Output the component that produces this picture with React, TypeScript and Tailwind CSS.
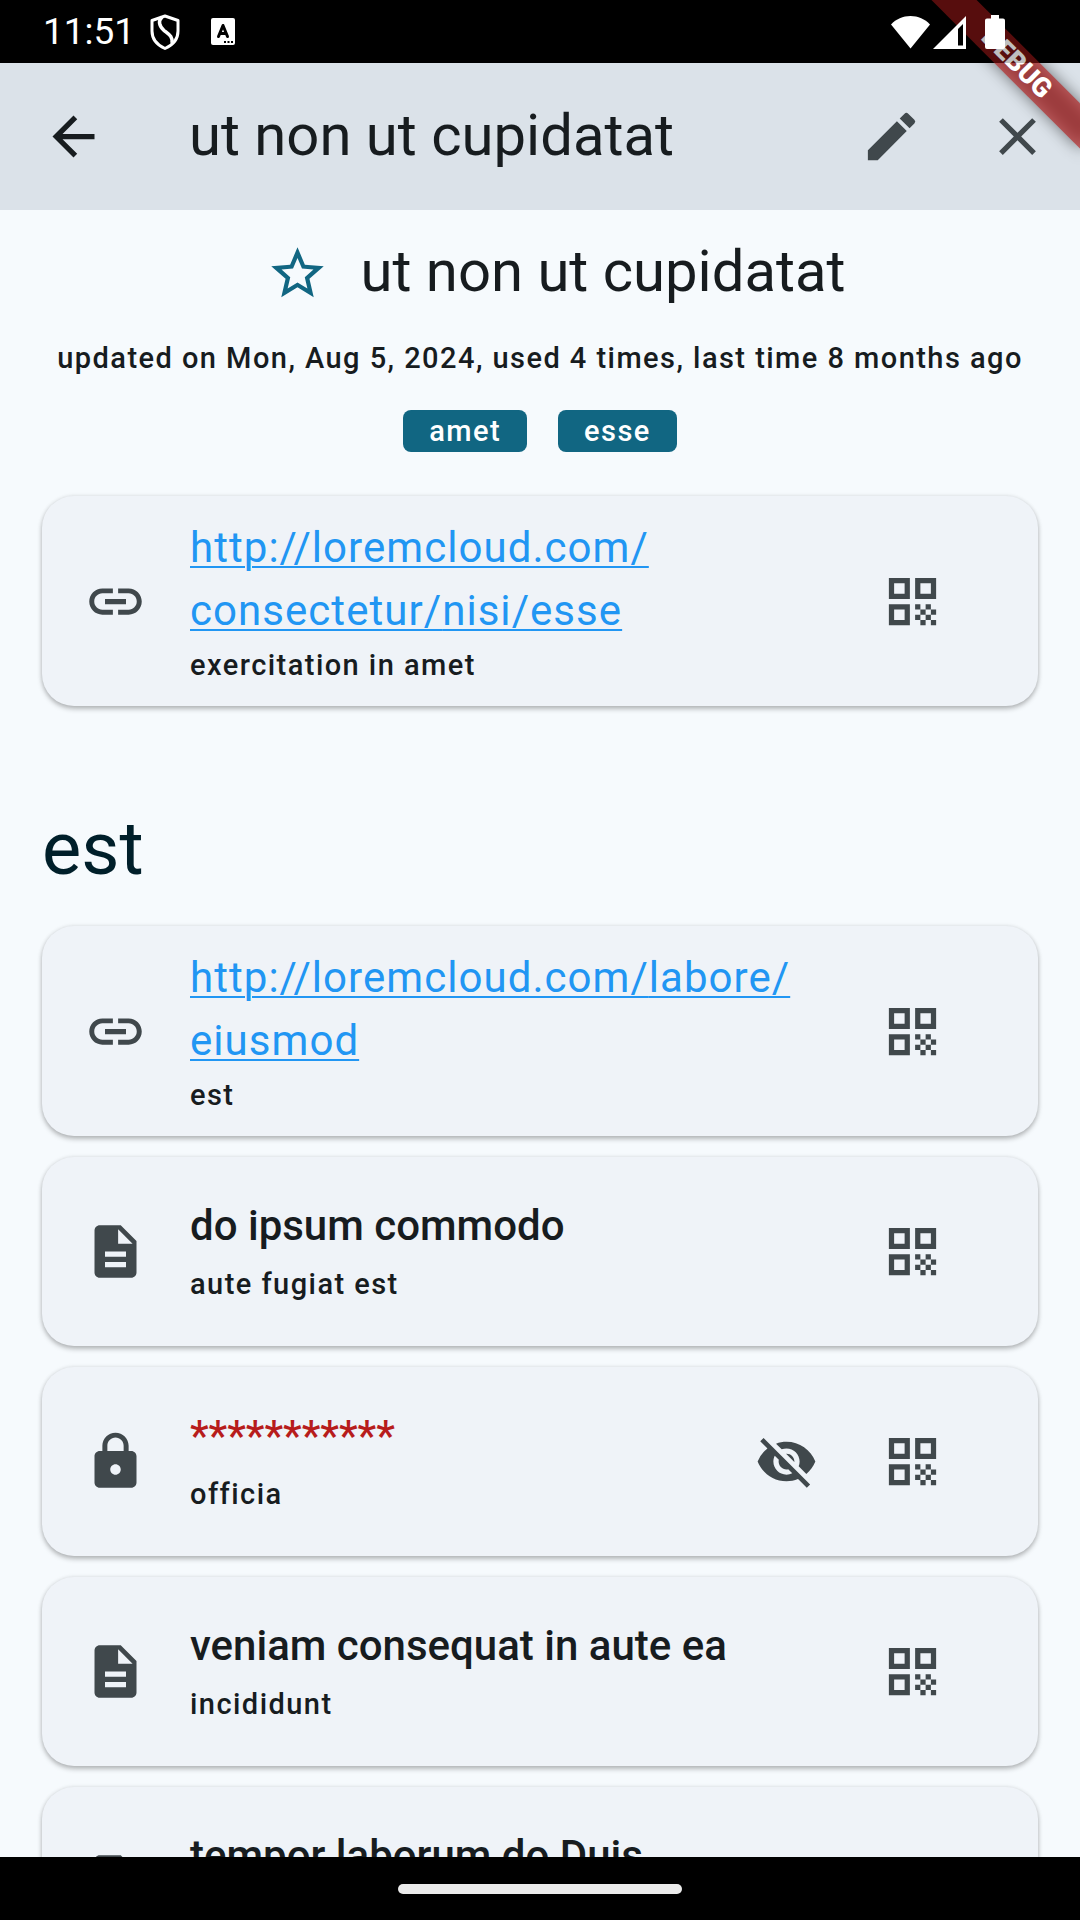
import type { ReactNode } from "react";
import {
  MdArrowBack,
  MdClose,
  MdDescription,
  MdEdit,
  MdLink,
  MdLock,
  MdQrCode,
  MdStarBorder,
  MdVisibilityOff,
} from "react-icons/md";

type Field = {
  kind: "link" | "text" | "secret";
  parts: string[];
  label: string;
};

const topFields: Field[] = [
  {
    kind: "link",
    parts: ["http://loremcloud.com/", "consectetur/", "nisi/", "esse"],
    label: "exercitation in amet",
  },
];

const sectionFields: Field[] = [
  { kind: "link", parts: ["http://loremcloud.com/", "labore/", "eiusmod"], label: "est" },
  { kind: "text", parts: ["do ipsum commodo"], label: "aute fugiat est" },
  { kind: "secret", parts: ["***********"], label: "officia" },
  { kind: "text", parts: ["veniam consequat in aute ea"], label: "incididunt" },
  { kind: "text", parts: ["tempor laborum do Duis"], label: "" },
];

function IconButton({ label, children }: { label: string; children: ReactNode }) {
  return (
    <button
      type="button"
      aria-label={label}
      className="flex size-[126px] shrink-0 items-center justify-center text-[63px]"
    >
      {children}
    </button>
  );
}

function StatusBar() {
  return (
    <div className="relative z-20 flex h-[63px] shrink-0 items-center bg-black/25 pr-[75px] pl-[43px] text-white">
      <span className="text-[37px] leading-[42px]">11:51</span>
      <svg className="ml-[15px] h-9 w-[30px]" viewBox="0 0 30 36" fill="none" stroke="currentColor" strokeWidth="3">
        <path d="M15 2 28 6.500V17c0 8-5 14-13 17.500C7 31 2 25 2 17V6.500Z" strokeLinejoin="round" />
        <path d="M12 3C8 7 9 12 14 16.500c5 4 9 6 8 12.500" strokeWidth="3.500" />
      </svg>
      <svg className="ml-[31px] h-[27px] w-6" viewBox="0 0 24 27">
        <rect width="24" height="27" rx="2" fill="currentColor" />
        <path d="M7.500 18.500 12 7.500l4.500 11M9 15.500h6" fill="none" stroke="#000" strokeWidth="3" strokeLinecap="round" strokeLinejoin="round" />
        <path d="M13 23h2v2h-2zM16.500 23h2v2h-2zM20 23h2v2h-2z" fill="#000" />
      </svg>
      <div className="ml-auto flex items-center">
        <svg className="h-[34px] w-[39px]" viewBox="0 0 39 34" fill="currentColor">
          <path d="M0 9.500C5 4 12 1 19.500 1S34 4 39 9.500L19.500 33.500Z" />
        </svg>
        <svg className="ml-[3px] h-[34px] w-[33px]" viewBox="0 0 33 34">
          <path d="M33 1v33H0Z" fill="currentColor" />
          <path d="M25 14 30 9V30.500H25Z" fill="#000" />
        </svg>
        <svg className="ml-[19px] h-[34px] w-5" viewBox="0 0 20 34" fill="currentColor">
          <path d="M6 0h8v3.500h4a2 2 0 0 1 2 2V32a2 2 0 0 1-2 2H2a2 2 0 0 1-2-2V5.500a2 2 0 0 1 2-2h4Z" />
        </svg>
      </div>
    </div>
  );
}

function DebugBanner() {
  return (
    <div className="pointer-events-none absolute top-0 right-0 z-10 size-[210px] overflow-hidden">
      <div className="absolute top-[47px] right-[-42px] h-8 w-[210px] rotate-45 bg-black/50 blur-[8px]" />
      <div className="absolute top-[47px] right-[-42px] flex h-8 w-[210px] rotate-45 items-center justify-center bg-[#b71c1c]/63 text-[27px] leading-8 font-black text-white">
        DEBUG
      </div>
    </div>
  );
}

function FieldValue({ field }: { field: Field }) {
  if (field.kind === "link") {
    return (
      <a
        href={field.parts.join("")}
        className="tracking-wide text-[#2196f3] underline decoration-2 underline-offset-4"
      >
        {field.parts.map((part) => (
          <span key={part}>
            {part}
            <wbr />
          </span>
        ))}
      </a>
    );
  }
  if (field.kind === "secret") {
    return <span className="font-medium text-[#b71c1c]">{field.parts[0]}</span>;
  }
  return <span className="font-medium">{field.parts[0]}</span>;
}

function FieldCard({ field }: { field: Field }) {
  const Icon = { link: MdLink, text: MdDescription, secret: MdLock }[field.kind];
  return (
    <li className="flex min-h-[189px] shrink-0 items-center rounded-[32px] bg-[#eff3f8] pr-[63px] pl-[42px] shadow-[0_3px_5px_rgba(0,0,0,0.25),0_0_4px_rgba(0,0,0,0.1)]">
      <Icon className="size-[63px] shrink-0 text-[#40484c]" />
      <div
        className={
          field.kind === "link"
            ? "ml-[43px] flex min-w-0 flex-1 flex-col gap-0.5 py-5"
            : "ml-[43px] flex min-w-0 flex-1 flex-col gap-1.5 pb-1"
        }
      >
        <div className="text-[42px] leading-[63px]">
          <FieldValue field={field} />
        </div>
        <div className="min-h-[42px] text-[29px] leading-[42px] font-medium tracking-wider">
          {field.label}
        </div>
      </div>
      <div className="flex text-[#40484c]">
        {field.kind === "secret" && (
          <IconButton label="Show value">
            <MdVisibilityOff />
          </IconButton>
        )}
        <IconButton label="Show QR code">
          <MdQrCode />
        </IconButton>
      </div>
    </li>
  );
}

export default function App() {
  return (
    <div className="relative flex h-screen flex-col overflow-hidden bg-black font-['Roboto',sans-serif] text-[#171c1f]">
      <StatusBar />
      <DebugBanner />
      <header className="flex h-[147px] shrink-0 items-center bg-[#dbe2e9] text-[#40484c]">
        <button type="button" aria-label="Back" className="ml-[42px] text-[63px] text-[#171c1f]">
          <MdArrowBack />
        </button>
        <h1 className="ml-[84px] flex-1 pb-1 text-[58px] leading-[74px] text-[#171c1f]">
          ut non ut cupidatat
        </h1>
        <IconButton label="Edit">
          <MdEdit />
        </IconButton>
        <IconButton label="Close">
          <MdClose />
        </IconButton>
      </header>

      <main className="min-h-0 flex-1 overflow-hidden bg-[#f6fafd] px-[42px]">
        <div className="flex items-center justify-center">
          <span className="text-[#116682]">
            <IconButton label="Add to favourites">
              <MdStarBorder />
            </IconButton>
          </span>
          <h2 className="pb-1 text-[58px] leading-[74px]">ut non ut cupidatat</h2>
        </div>
        <p className="mt-px text-center text-[29px] leading-[42px] font-medium tracking-wider whitespace-nowrap">
          updated on Mon, Aug 5, 2024, used 4 times, last time 8 months ago
        </p>
        <ul className="mt-[31px] flex justify-center gap-[31px]">
          {["amet", "esse"].map((tag) => (
            <li
              key={tag}
              className="rounded-lg bg-[#116682] px-[26px] text-[29px] leading-[42px] font-medium tracking-wider text-white"
            >
              {tag}
            </li>
          ))}
        </ul>
        <ul className="mt-11 flex flex-col gap-[21px]">
          {topFields.map((field) => (
            <FieldCard key={field.label} field={field} />
          ))}
        </ul>
        <h2 className="mt-24 text-[74px] leading-[94px] text-[#001f2a]">est</h2>
        <ul className="mt-[30px] flex flex-col gap-[21px]">
          {sectionFields.map((field) => (
            <FieldCard key={field.parts[0] + field.label} field={field} />
          ))}
        </ul>
      </main>

      <footer className="flex h-[63px] shrink-0 items-center justify-center bg-black">
        <div className="h-[10px] w-[284px] rounded-full bg-[#ebebeb]" />
      </footer>
    </div>
  );
}
